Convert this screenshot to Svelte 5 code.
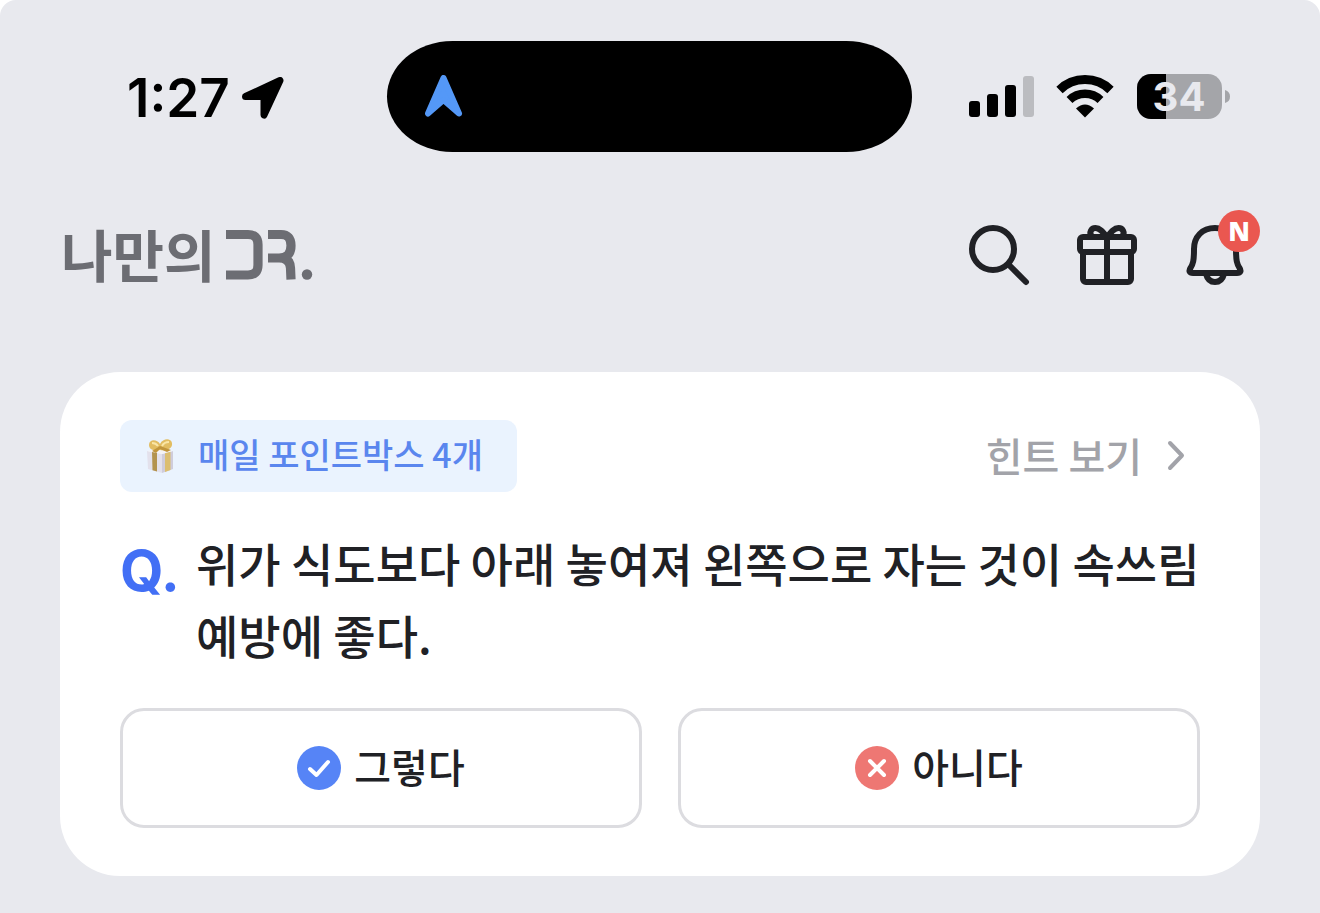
<script lang="ts">
	type Answer = 'yes' | 'no';

	const time = '1:27';
	const battery = 34;
	const pointBoxes = 4;
	const question = '위가 식도보다 아래 놓여져 왼쪽으로 자는 것이 속쓰림 예방에 좋다.';

	let answer: Answer | null = $state(null);

	function choose(value: Answer) {
		answer = value;
	}
</script>

<div class="screen">
	<div class="status-bar">
		<div class="status-left">
			<span class="time">{time}</span>
			<svg width="42" height="42" viewBox="0 0 42 42" aria-hidden="true">
				<path
					d="M3.5 19.5 38 3.500 22 38V19.5Z"
					fill="#000"
					stroke="#000"
					stroke-width="7"
					stroke-linejoin="round"
				/>
			</svg>
		</div>

		<div class="island">
			<svg width="38" height="44" viewBox="0 0 38 44" aria-hidden="true">
				<path
					d="M18.500 3 34 38.500 18.500 25 3 38.500Z"
					fill="#5498f7"
					stroke="#5498f7"
					stroke-width="6"
					stroke-linejoin="round"
				/>
			</svg>
		</div>

		<div class="status-right">
			<svg width="66" height="46" viewBox="0 0 66 46" aria-hidden="true">
				<rect x="1" y="27" width="11" height="16" rx="3" />
				<rect x="19" y="20" width="11" height="23" rx="3" />
				<rect x="37" y="11" width="11" height="32" rx="3" />
				<rect x="55" y="2" width="11" height="41" rx="3" fill="#bbbcc0" />
			</svg>
			<svg width="58" height="46" viewBox="0 0 58 46" aria-hidden="true">
				<path d="M3.500 16a36.500 36.500 0 0 1 51 0" fill="none" stroke="#000" stroke-width="9" />
				<path d="M13.500 26a22.500 22.500 0 0 1 31 0" fill="none" stroke="#000" stroke-width="8.500" />
				<path d="M29 43.500l-9-9q9-8 18 0Z" />
			</svg>
			<div class="battery">
				<svg width="94" height="46" viewBox="0 0 94 46" aria-hidden="true">
					<rect x="1" width="85" height="45" rx="14" fill="#a4a5a9" />
					<path d="M15 0H30V45H15A14 14 0 0 1 1 31V14A14 14 0 0 1 15 0Z" />
					<path d="M89 16q5 1.500 5 6.500t-5 6.500Z" fill="#a4a5a9" />
				</svg>
				<span>{battery}</span>
			</div>
		</div>
	</div>

	<header class="app-header">
		<a class="logo" href="#home" aria-label="나만의 DR.">
			<span>나만의</span>
			<svg width="88" height="56" viewBox="0 0 88 56" aria-hidden="true">
				<g fill="none" stroke="#6c6d73" stroke-width="9.200">
					<path d="M0 7.500H22Q32 7.500 32 17.500V38Q32 48 22 48H0" />
					<path d="M42 7.500H55Q65 7.500 65 18.500Q65 31 53 31H42M53 31Q64 31 64.500 41L65 52.500" />
				</g>
				<circle cx="81" cy="47.500" r="5.200" fill="#6c6d73" />
			</svg>
		</a>

		<nav class="actions">
			<button class="icon-btn" aria-label="검색">
				<svg width="72" height="72" viewBox="0 0 72 72">
					<circle cx="30" cy="30" r="21" />
					<path d="M46 46 63 63" />
				</svg>
			</button>
			<button class="icon-btn" aria-label="선물">
				<svg width="72" height="72" viewBox="0 0 72 72">
					<rect x="9" y="18" width="54" height="15" rx="3" />
					<path d="M12 33V60a3 3 0 0 0 3 3H57a3 3 0 0 0 3-3V33M36 18V63" />
					<path d="M36 18C32 13 29 9 24.500 9S18 13.500 20.500 17M36 18C40 13 43 9 47.500 9S54 13.500 51.500 17" />
				</svg>
			</button>
			<button class="icon-btn" aria-label="알림">
				<svg width="72" height="72" viewBox="0 0 72 72">
					<path
						d="M36 9C23 9 15 18 15 30C15 42 14 45 11.500 49C9.500 52 10.500 54 14 54H58C61.500 54 62.500 52 60.500 49C58 45 57 42 57 30C57 18 49 9 36 9Z"
					/>
					<path d="M27 55Q29 63 36 63T45 55" />
				</svg>
				<span class="badge">N</span>
			</button>
		</nav>
	</header>

	<main class="card">
		<div class="card-top">
			<div class="chip">
				<svg width="30" height="36" viewBox="0 0 30 36" aria-hidden="true">
					<path d="M1 13 16 16V35L2 31Z" fill="#e3e1ec" />
					<path d="M16 16 27 13V31L16 35Z" fill="#cfccdb" />
					<path d="M1 13 12 10.500 27 13 16 16Z" fill="#f5f3f5" />
					<path d="M6 14 11 15V33.500L6.500 32.300Z" fill="#b3934f" />
					<path d="M19 15.200 24.500 13.800V32L19 34Z" fill="#dcbe70" />
					<path
						d="M14 12C9 13 3 12 3 7C3 1 11 1 14 6C17 0 25 0 26 5C27 11 20 13 14 12Z"
						fill="#e2bd62"
					/>
					<path d="M14 8 6 13 10 15 14 11 21 14 25 12Z" fill="#c1953c" />
					<path d="M6 5q4 0 6 3M23 4q-5 0-7 4" fill="none" stroke="#fae6a6" stroke-width="2" />
				</svg>
				<span>매일 포인트박스 {pointBoxes}개</span>
			</div>
			<a class="hint" href="#hint">
				힌트 보기
				<svg width="24" height="36" viewBox="0 0 24 36" aria-hidden="true">
					<path d="M6 6 18 18.500 6 31" />
				</svg>
			</a>
		</div>

		<div class="question">
			<span class="mark">Q.</span>
			<p>{question}</p>
		</div>

		<div class="answers">
			<button class:chosen={answer === 'yes'} onclick={() => choose('yes')}>
				<svg width="44" height="44" viewBox="0 0 44 44" aria-hidden="true">
					<circle cx="22" cy="22" r="22" fill="#5684f6" />
					<path d="M13 23 19.500 29 31 16" />
				</svg>
				<span>그렇다</span>
			</button>
			<button class:chosen={answer === 'no'} onclick={() => choose('no')}>
				<svg width="44" height="44" viewBox="0 0 44 44" aria-hidden="true">
					<circle cx="22" cy="22" r="22" fill="#ee7773" />
					<path d="M15 15 29 29M29 15 15 29" />
				</svg>
				<span>아니다</span>
			</button>
		</div>
	</main>
</div>

<style>
	:global(body) {
		background: #fff;
	}

	.screen {
		box-sizing: border-box;
		min-height: 100vh;
		padding-bottom: 36px;
		background: #e8e9ee;
		border-radius: 16px 16px 0 0;
		color: #202125;
		font-family: 'Noto Sans CJK KR', sans-serif;
		font-weight: 500;
	}

	svg {
		display: block;
		flex: none;
	}

	.status-bar {
		display: grid;
		grid-template-columns: 1fr 525px 1fr;
		align-items: center;
		padding: 41px 90px 0 69px;
		color: #000;
		font-family: Inter, sans-serif;
	}

	.status-left {
		display: flex;
		align-items: center;
		gap: 12px;
		padding: 3px 0 0 58px;
	}

	.time {
		font-size: 53px;
		font-weight: 600;
		line-height: 56px;
	}

	.island {
		display: flex;
		align-items: center;
		box-sizing: border-box;
		height: 111px;
		padding: 0 38px;
		background: #000;
		border-radius: 66px / 56px;
	}

	.status-right {
		display: flex;
		align-items: center;
		justify-content: flex-end;
		gap: 22px;
	}

	.battery {
		position: relative;
	}

	.battery span {
		position: absolute;
		inset: 0 8px 0 0;
		color: #e8e9ee;
		font-size: 40px;
		font-weight: 700;
		line-height: 46px;
		text-align: center;
	}

	.app-header {
		display: flex;
		align-items: center;
		justify-content: space-between;
		padding: 67px 69px 0 61px;
	}

	.logo {
		display: flex;
		align-items: center;
		gap: 10px;
		color: #6c6d73;
		font-size: 56px;
		font-weight: 700;
		line-height: 68px;
		text-decoration: none;
	}

	.logo span {
		padding-bottom: 4px;
	}

	.actions {
		display: flex;
		gap: 36px;
	}

	.icon-btn {
		position: relative;
		padding: 0;
		background: none;
		border: none;
		cursor: pointer;
	}

	.icon-btn svg {
		fill: none;
		stroke: #202125;
		stroke-width: 6;
		stroke-linecap: round;
		stroke-linejoin: round;
	}

	.badge {
		position: absolute;
		top: -9px;
		right: -9px;
		width: 42px;
		height: 42px;
		background: #ea5750;
		border-radius: 50%;
		color: #fff;
		font-family: 'Open Sans', sans-serif;
		font-size: 26px;
		font-weight: 800;
		line-height: 42px;
		text-align: center;
	}

	.card {
		margin: 81px 60px 0;
		padding: 48px 60px;
		background: #fff;
		border-radius: 60px;
	}

	.card-top {
		display: flex;
		align-items: center;
		justify-content: space-between;
	}

	.chip {
		display: flex;
		align-items: center;
		gap: 22px;
		height: 72px;
		padding: 0 34px 0 26px;
		background: #eaf3fe;
		border-radius: 12px;
		color: #5a86ee;
		font-size: 34px;
		line-height: 68px;
	}

	.chip span,
	.answers span {
		padding-bottom: 4px;
	}

	.hint {
		display: flex;
		align-items: center;
		gap: 22px;
		padding: 0 12px 2px 0;
		color: #a2a3a9;
		font-size: 40px;
		line-height: 68px;
		text-decoration: none;
	}

	.hint svg {
		fill: none;
		stroke: #a2a3a9;
		stroke-width: 4;
		stroke-linecap: round;
		stroke-linejoin: round;
	}

	.question {
		display: grid;
		grid-template-columns: 76px 1fr;
		margin: 34px 0 38px;
		line-height: 72px;
	}

	.question p {
		margin: 0;
		font-size: 46px;
	}

	.mark {
		padding-top: 9px;
		color: #426ff5;
		font-family: Inter, sans-serif;
		font-size: 56px;
		font-weight: 700;
	}

	.answers {
		display: grid;
		grid-template-columns: 1fr 1fr;
		gap: 36px;
	}

	.answers button {
		display: flex;
		align-items: center;
		justify-content: center;
		gap: 13px;
		height: 120px;
		padding: 0;
		background: #fff;
		border: 3px solid #dcdce0;
		border-radius: 24px;
		color: #202125;
		font: inherit;
		font-size: 40px;
		cursor: pointer;
	}

	.answers button.chosen {
		border-color: #5684f6;
	}

	.answers path {
		fill: none;
		stroke: #fff;
		stroke-width: 4;
		stroke-linecap: round;
		stroke-linejoin: round;
	}
</style>
